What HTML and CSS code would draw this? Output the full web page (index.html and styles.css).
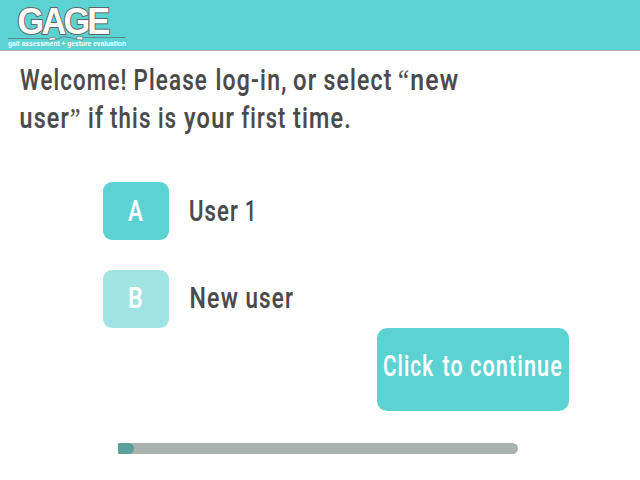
FILE: index.html
```html
<!DOCTYPE html>
<html lang="en">
<head>
<meta charset="utf-8">
<title>GAGE</title>
<link rel="stylesheet" href="styles.css">
</head>
<body>
<header class="topbar">
  <svg class="logo" width="130" height="50" viewBox="0 0 130 50">
    <text class="logo-name" x="17.500" y="33.500" textLength="90" lengthAdjust="spacingAndGlyphs">GAGE</text>
    <path class="walkline" d="M8 38.5H47L49 39.5L57 39L64 36.5L76 39L84 37.5H125.500"/>
    <path class="step" d="M49 38l6-.8 1 2.500-7 .8zM77 36.700l6 .3-.5 3-6-.8z"/>
    <text class="tagline" x="8" y="46.300" textLength="118" lengthAdjust="spacingAndGlyphs">gait assessment + gesture evaluation</text>
  </svg>
</header>
<main class="screen">
  <h1 class="welcome">
    <svg class="label" width="450" height="80" viewBox="0 0 450 80">
      <text x="0" y="30" textLength="107.500" lengthAdjust="spacingAndGlyphs">Welcome!</text>
      <text x="113.500" y="30" textLength="74.500" lengthAdjust="spacingAndGlyphs">Please</text>
      <text x="195.500" y="30" textLength="72" lengthAdjust="spacingAndGlyphs">log-in,</text>
      <text x="273" y="30" textLength="24.500" lengthAdjust="spacingAndGlyphs">or</text>
      <text x="303.500" y="30" textLength="69" lengthAdjust="spacingAndGlyphs">select</text>
      <text x="378" y="30" textLength="61.500" lengthAdjust="spacingAndGlyphs"><tspan class="quote">“</tspan>new</text>
      <text x="-.5" y="68" textLength="62" lengthAdjust="spacingAndGlyphs">user<tspan class="quote">”</tspan></text>
      <text x="68" y="68" textLength="16" lengthAdjust="spacingAndGlyphs">if</text>
      <text x="90" y="68" textLength="41.500" lengthAdjust="spacingAndGlyphs">this</text>
      <text x="138" y="68" textLength="19" lengthAdjust="spacingAndGlyphs">is</text>
      <text x="164" y="68" textLength="51" lengthAdjust="spacingAndGlyphs">your</text>
      <text x="221.500" y="68" textLength="45" lengthAdjust="spacingAndGlyphs">first</text>
      <text x="273" y="68" textLength="59" lengthAdjust="spacingAndGlyphs">time.</text>
    </svg>
  </h1>
  <div class="choices">
    <div class="choice">
      <span class="key"><svg class="label" width="66" height="58"><text x="25" y="39" textLength="16" lengthAdjust="spacingAndGlyphs">A</text></svg></span>
      <svg class="label" width="120" height="58">
        <text x="-1" y="39" textLength="50" lengthAdjust="spacingAndGlyphs">User</text>
        <text x="55" y="39" textLength="12" lengthAdjust="spacingAndGlyphs">1</text>
      </svg>
    </div>
    <div class="choice">
      <span class="key key-light"><svg class="label" width="66" height="58"><text x="25" y="38" textLength="16" lengthAdjust="spacingAndGlyphs">B</text></svg></span>
      <svg class="label" width="120" height="58">
        <text x="-.5" y="38" textLength="49.500" lengthAdjust="spacingAndGlyphs">New</text>
        <text x="55.500" y="38" textLength="48.500" lengthAdjust="spacingAndGlyphs">user</text>
      </svg>
    </div>
  </div>
  <button class="continue" type="button">
    <svg class="label" width="192" height="83">
      <text x="6" y="48" textLength="51" lengthAdjust="spacingAndGlyphs">Click</text>
      <text x="65.500" y="48" textLength="21" lengthAdjust="spacingAndGlyphs">to</text>
      <text x="93" y="48" textLength="93" lengthAdjust="spacingAndGlyphs">continue</text>
    </svg>
  </button>
  <div class="progress"><div class="progress-fill"></div></div>
</main>
</body>
</html>
```
FILE: styles.css
```css
* { box-sizing: border-box; }
body {
  margin: 0;
  background: #fff;
  font-family: Roboto, "Liberation Sans", sans-serif;
}
svg { display: block; overflow: visible; }
.topbar {
  height: 51px;
  background: #5dd2d2;
  border-bottom: 1px solid #a9b4b2;
}
.logo-name {
  font: bold 37px "Liberation Sans", sans-serif;
  letter-spacing: -3px;
  fill: #fff;
  stroke: #5c6666;
  stroke-width: 2px;
  paint-order: stroke;
}
.walkline { fill: none; stroke: #5c7775; stroke-width: .8; }
.step { fill: #fff; stroke: #5c6666; stroke-width: .6; }
.tagline {
  font: bold 6.3px "Liberation Sans", sans-serif;
  fill: #f4ffff;
}
.screen {
  display: flex;
  flex-direction: column;
  height: 429px;
}
.label {
  font-size: 29px;
  font-weight: 500;
  letter-spacing: 1.5px;
  fill: #4a4a4a;
  stroke: #4a4a4a;
  stroke-width: .2px;
}
.quote { font-family: "Liberation Serif", serif; }
.welcome {
  margin: 9px 0 0 20px;
  height: 80px;
}
.choices {
  display: flex;
  flex-direction: column;
  gap: 30px;
  margin: 42px 0 0 103px;
}
.choice {
  display: flex;
  gap: 21px;
  height: 58px;
}
.key {
  width: 66px;
  border-radius: 9px;
  background: #5dd2d2;
}
.key-light { background: #9fe4e3; }
.key .label, .continue .label { fill: #fff; stroke: #fff; }
.continue {
  width: 192px;
  height: 83px;
  margin: 0 0 0 377px;
  padding: 0;
  border: 0;
  border-radius: 10px;
  background: #5dd2d2;
  font-family: inherit;
}
.progress {
  width: 400px;
  height: 11px;
  margin: 32px 0 0 118px;
  border-radius: 0 6px 6px 0;
  background: #a9b1af;
}
.progress-fill {
  width: 16px;
  height: 11px;
  border-radius: 3px 6px 6px 3px;
  background: #5b9f9b;
}
```
